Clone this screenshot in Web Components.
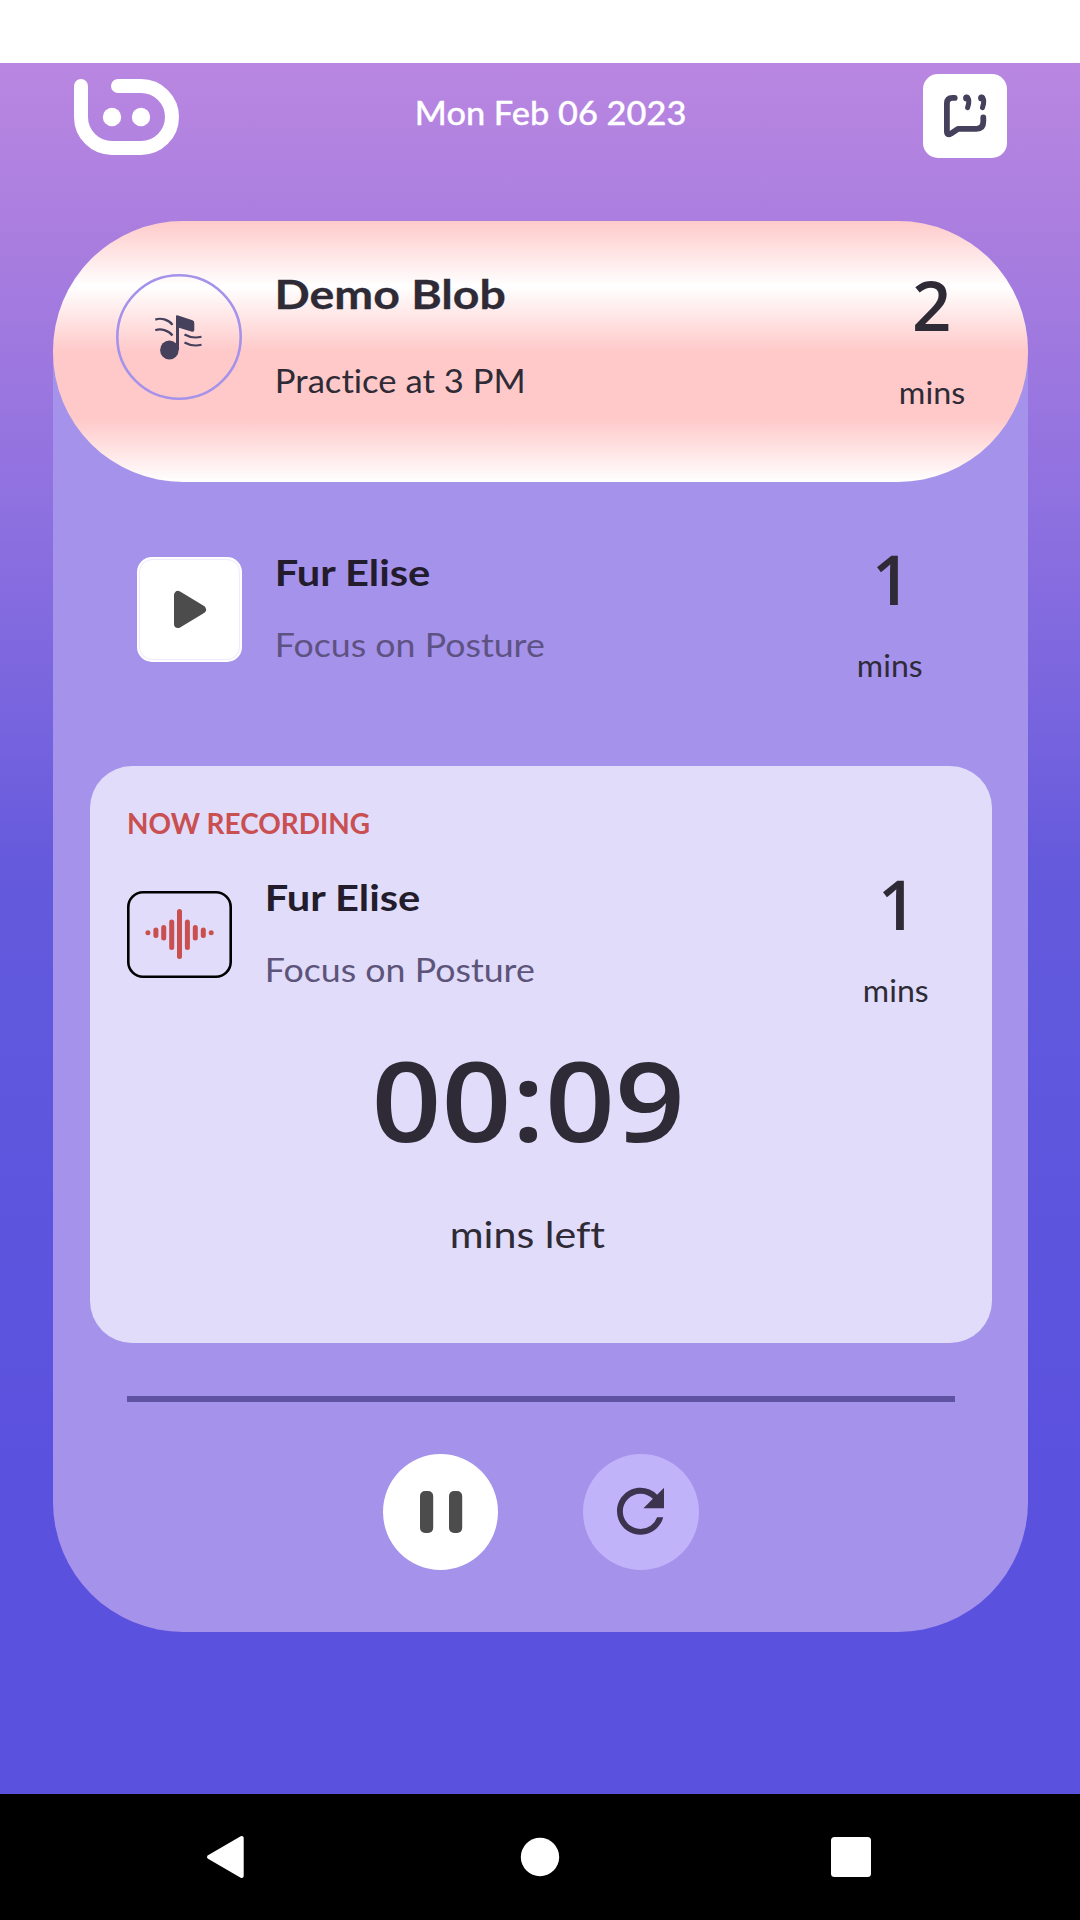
<!DOCTYPE html>
<html lang="en">
<head>
<meta charset="utf-8">
<title>Practice</title>
<style>
html,body{margin:0;padding:0}
body{width:1080px;height:1920px;overflow:hidden;background:#fff;font-family:Lato,"Open Sans",sans-serif}
</style>
</head>
<body>
<practice-screen></practice-screen>
<script>
/* Text whose drawn width is fixed; the bottom edge of its box is the baseline. */
class FitText extends HTMLElement{
  connectedCallback(){
    const size=+this.getAttribute('size'),weight=this.getAttribute('weight')||400,w=+this.getAttribute('ink'),thick=this.getAttribute('thick')||0;
    const family=this.hasAttribute('digits')?'"Open Sans", sans-serif':'Lato, "Open Sans", sans-serif';
    const root=this.attachShadow({mode:'open'});
    const ctx=document.createElement('canvas').getContext('2d');
    ctx.font=`${weight} ${size}px ${family}`;
    const m=ctx.measureText(this.textContent.trim());
    const k=(m.fontBoundingBoxAscent-m.fontBoundingBoxDescent)/2;
    root.innerHTML=`<style>
      :host{display:block;flex:none;width:${w}px;height:${size}px;white-space:nowrap}
      span{display:block;width:max-content;font-family:${family};font-size:${size}px;font-weight:${weight};font-variant-ligatures:none;line-height:${2*(size-k)}px;-webkit-text-stroke:${thick}px currentColor;transform-origin:0 0}
    </style><span><slot></slot></span>`;
    const span=root.querySelector('span');
    const inkNatural=span.offsetWidth-(m.width-m.actualBoundingBoxLeft-m.actualBoundingBoxRight);
    const scale=w/inkNatural;
    span.style.transform=`translateX(${m.actualBoundingBoxLeft*scale}px) scaleX(${scale})`;
  }
}
customElements.define('fit-text',FitText);

const define=(name,html)=>{
  const t=document.createElement('template');t.innerHTML=html;
  customElements.define(name,class extends HTMLElement{
    constructor(){super();this.attachShadow({mode:'open'}).append(t.content.cloneNode(true));}
  });
};

define('app-header',`<style>
:host{display:flex;align-items:flex-start;height:158px;box-sizing:border-box;padding:11px 73px 0 74px;color:#fff}
.logo{margin-top:5px}
fit-text{margin:19px 0 0 237px}
.btn{margin-left:auto;width:84px;height:84px;border-radius:15px;background:#fff}
svg{display:block}
</style>
<svg class="logo" width="106" height="76" viewBox="74 79 106 76" fill="none" stroke="#fff" stroke-width="14" stroke-linecap="round"><path d="M81 86V117A31 31 0 0 0 112 148H141A31 31 0 0 0 141 86H118"/><g fill="#fff" stroke="none"><circle cx="112" cy="117" r="9.2"/><circle cx="141" cy="117" r="9.2"/></g></svg>
<fit-text size="32" weight="500" ink="268" thick=".3">Mon Feb 06 2023</fit-text>
<div class="btn"><svg width="84" height="84" viewBox="923 74 84 84" fill="none" stroke="#45405b" stroke-width="5.8" stroke-linecap="round" stroke-linejoin="round"><path d="M954.7 97.9H952.5Q946.9 97.9 946.9 103.5V131.5Q947 136 951 133.6L958 128.8H976.5Q983.3 128.8 983.3 121.5V117.3"/><path d="M966.4 97.4Q970.6 98.6 967.6 107.6M981.3 97.4Q985.5 98.6 982.5 107.6" stroke-width="5"/><g fill="#45405b" stroke="none"><circle cx="966.6" cy="98" r="3.5"/><circle cx="981.6" cy="98" r="3.5"/></g></svg></div>`);

define('practice-row',`<style>
:host{display:flex;align-items:flex-start;box-sizing:border-box}
.text{margin:var(--text-top) 0 0 35px;display:flex;flex-direction:column;gap:var(--text-gap)}
.time{margin:var(--time-top) 0 0 auto;display:flex;flex-direction:column;align-items:center;gap:var(--time-gap,42px)}
</style>
<slot name="icon"></slot><div class="text"><slot name="text"></slot></div><div class="time"><slot name="time"></slot></div>`);

define('note-icon',`<style>:host{display:block;width:126px;height:126px}svg{display:block}</style>
<svg width="126" height="126" viewBox="116 274 126 126"><circle cx="179" cy="337" r="61.7" fill="none" stroke="#a592eb" stroke-width="2.6"/><g fill="#45405b"><ellipse cx="169.4" cy="350" rx="9.3" ry="9.6"/><path d="M176 316.2Q176 315 177.3 315.3L192.5 320.3Q194.3 321 194.3 323V330Q194.3 332.3 192 331.7L179 327.7V350H176Z"/></g><g fill="none" stroke="#45405b" stroke-width="2.2"><path d="M155.3 319.6C160.5 317.6 168.5 319.3 172.5 324.8M155.3 330.3C160.5 328.3 168.5 330 172.5 335.5M184.5 334.5Q192.5 339 201.5 336.7M184.5 342.5Q192.5 347 201.5 344.8"/></g></svg>`);

define('play-icon',`<style>:host{display:block;width:105px;height:105px;border-radius:15px;background:#fff}svg{display:block}</style>
<svg width="105" height="105" viewBox="137 557 105 105"><rect x="139.4" y="559.4" width="100.2" height="100.2" rx="13" fill="none" stroke="#e9e2fb" stroke-width=".8"/><path d="M178 595V624L202 609.5Z" fill="#4c4c4c" stroke="#4c4c4c" stroke-width="8" stroke-linejoin="round"/></svg>`);

define('wave-icon',`<style>:host{display:block;width:105px;height:87px}svg{display:block}</style>
<svg width="105" height="87" viewBox="127 891 105 87" stroke="#c9504f" stroke-width="5" stroke-linecap="round"><rect x="128.3" y="892.3" width="102.4" height="84.4" rx="14.7" fill="none" stroke="#000" stroke-width="2.6"/><path d="M147.9 932.7h.01M155.9 930v5.4M163.7 927.5v10.6M171.7 922v25.5M179.5 911.5v45M187.4 922v25.5M195.3 927.5v10.6M203.3 930v5.4M211.2 932.7h.01"/></svg>`);

define('recording-card',`<style>
:host{display:flex;flex-direction:column;align-items:flex-start;box-sizing:border-box;height:577px;margin:0 36px 0 37px;padding-top:40px;background:#e1dcfa;border-radius:42px;color:#2e2b36}
.head{color:#c94f50;margin-left:39px}
practice-row{--text-top:41px;--text-gap:39px;--time-top:28px;width:100%;height:167px;padding:0 64px 0 37px}
wave-icon{margin-top:57px}
.one{margin-right:7px}.t{color:#221c2c}.s{color:#5d547a}
.timer{align-self:stretch;display:flex;flex-direction:column;align-items:center;margin:31px 26px 0 0;gap:69px}
</style>
<fit-text class="head" size="28" weight="700" ink="240">NOW RECORDING</fit-text>
<practice-row><wave-icon slot="icon"></wave-icon>
<fit-text slot="text" class="t" size="36" weight="700" ink="153.5">Fur Elise</fit-text>
<fit-text slot="text" class="s" size="32" ink="267">Focus on Posture</fit-text>
<fit-text slot="time" class="one" digits size="68" weight="600" ink="21">1</fit-text>
<fit-text slot="time" size="30" ink="63">mins</fit-text></practice-row>
<div class="timer"><fit-text digits size="110" weight="600" ink="305">00:09</fit-text><fit-text size="37" ink="153">mins left</fit-text></div>`);

define('player-controls',`<style>
:host{display:flex;gap:85px;padding:52px 0 0 330px}
div{width:115px;height:116px;border-radius:50%;background:#fff}
.r{width:116px;background:#c0b3fa}
svg{display:block}
</style>
<div><svg width="115" height="116" viewBox="383 1454 115 116" fill="#4c4c4c"><rect x="420" y="1491" width="13.2" height="42" rx="5"/><rect x="449" y="1491" width="13.2" height="42" rx="5"/></svg></div>
<div class="r"><svg width="116" height="116" viewBox="583 1454 116 116"><path transform="translate(605.2 1476) scale(2.94)" fill="#3c344f" d="M17.65 6.35A7.958 7.958 0 0 0 12 4c-4.42 0-7.99 3.58-7.99 8s3.57 8 7.99 8c3.73 0 6.84-2.55 7.73-6h-2.08A5.99 5.99 0 0 1 12 18c-3.31 0-6-2.69-6-6s2.69-6 6-6c1.66 0 3.14.69 4.22 1.78L13 11h7V4l-2.35 2.35z"/></svg></div>`);

define('session-panel',`<style>
:host{display:block;height:1411px;background:#a592eb;border-radius:130px;color:#2e2b36}
.hero{--text-top:47px;--text-gap:52px;--time-top:42px;--time-gap:43px;height:261px;padding:0 64px 0 63px;border-radius:130px;background:linear-gradient(#ffcaca,#fff 25%,#ffc9c9 50%,#ffc9c9 76%,#fff)}
note-icon{margin-top:53px}
.next{--text-top:68px;--text-gap:39px;--time-top:55px;height:284px;padding:0 106px 0 84px}
play-icon{margin-top:75px}
.one{margin-right:7px}.t{color:#221c2c}.s{color:#5e5283}
.two{margin-right:2px}.demo{margin-left:1px}
hr{border:0;margin:53px 73px 0 74px;height:6px;background:#5f52a2}
</style>
<practice-row class="hero"><note-icon slot="icon"></note-icon>
<fit-text slot="text" class="demo" size="41" weight="700" ink="226" thick=".3">Demo Blob</fit-text>
<fit-text slot="text" size="32" ink="246">Practice at 3 PM</fit-text>
<fit-text slot="time" class="two" digits size="68" weight="600" ink="33.5">2</fit-text>
<fit-text slot="time" size="30" ink="63.5">mins</fit-text></practice-row>
<practice-row class="next"><play-icon slot="icon"></play-icon>
<fit-text slot="text" class="t" size="36" weight="700" ink="153.5">Fur Elise</fit-text>
<fit-text slot="text" class="s" size="32" ink="267">Focus on Posture</fit-text>
<fit-text slot="time" class="one" digits size="68" weight="600" ink="21">1</fit-text>
<fit-text slot="time" size="30" ink="63">mins</fit-text></practice-row>
<recording-card></recording-card><hr><player-controls></player-controls>`);

define('system-nav',`<style>
:host{display:block;height:126px;background:#000}
svg{display:block}
</style>
<svg width="1080" height="126" viewBox="0 1794 1080 126" fill="#fff"><path d="M209 1857L241.7 1838V1876Z" stroke="#fff" stroke-width="4" stroke-linejoin="round"/><circle cx="540" cy="1857" r="19.2"/><rect x="831" y="1837" width="40" height="40" rx="3.5"/></svg>`);

define('practice-screen',`<style>
:host{display:flex;flex-direction:column;width:1080px;height:1920px}
.status{height:63px;background:#fff}
main{height:1731px;background:linear-gradient(#b987e1,#ab7edf 157px,#8f71e0 437px,#7462de 687px,#655adc 800px,#6058dd 937px,#5b51df 1400px,#5b51df)}
session-panel{margin:0 52px 0 53px}
</style>
<div class="status"></div>
<main><app-header></app-header><session-panel></session-panel></main>
<system-nav></system-nav>`);
</script>
</body>
</html>
